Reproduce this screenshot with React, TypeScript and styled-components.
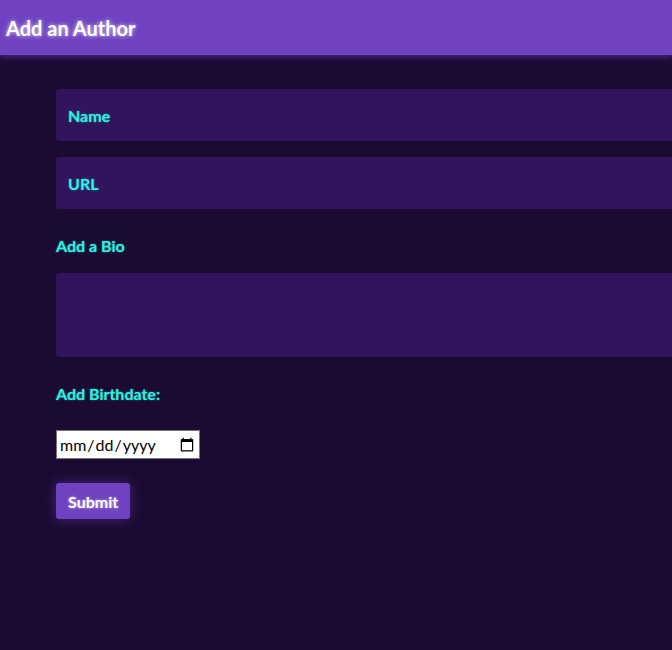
import styled, { createGlobalStyle } from "styled-components";

const GlobalStyle = createGlobalStyle`
  html, body {
    margin: 0;
    padding: 0;
    overflow: hidden;
    background: #1b0b33;
    font-family: Lato, "Noto Sans", sans-serif;
  }
`;

const Page = styled.div`
  min-height: 650px;
  background: #1b0b33;
`;

const Header = styled.header`
  height: 55px;
  display: flex;
  align-items: center;
  padding: 0 6px;
  background: #6f42c1;
  box-shadow: 0 2px 6px rgba(111, 66, 193, 0.55);
`;

const Title = styled.h1`
  margin: 0;
  color: #fff;
  font-size: 20px;
  font-weight: 700;
  text-shadow: 0 0 4px rgba(255, 255, 255, 0.8);
`;

const Form = styled.form`
  display: flex;
  flex-direction: column;
  align-items: flex-start;
  padding: 34px 0 0 56px;
`;

const Field = styled.input`
  box-sizing: border-box;
  width: 700px;
  height: 52px;
  margin-bottom: 16px;
  padding: 0 12px;
  border: none;
  border-radius: 3px;
  background: #30145c;
  color: #2ef2e0;
  font-family: inherit;
  font-size: 16px;
  font-weight: 700;
  outline: none;

  &::placeholder {
    color: #2ef2e0;
    opacity: 1;
    text-shadow: 0 0 2px rgba(46, 242, 224, 0.6);
  }
`;

const Label = styled.label<{ $gap?: number }>`
  margin: 11px 0 ${(p) => p.$gap ?? 18}px;
  color: #2ef2e0;
  font-size: 16px;
  font-weight: 700;
  text-shadow: 0 0 2px rgba(46, 242, 224, 0.6);
`;

const Bio = styled.textarea`
  box-sizing: border-box;
  width: 700px;
  height: 84px;
  margin-bottom: 16px;
  border: none;
  border-radius: 3px;
  background: #30145c;
  resize: none;
  outline: none;
`;

const DateInput = styled.input`
  box-sizing: border-box;
  width: 144px;
  height: 29px;
  margin-bottom: 24px;
  padding: 0 2px;
  border: 1px solid #767676;
  background: #fff;
  font-family: Lato, sans-serif;
  font-size: 16px;

  &::-webkit-datetime-edit-text {
    padding: 0;
  }
`;

const SubmitButton = styled.button`
  height: 36px;
  padding: 0 12px;
  border: none;
  border-radius: 3px;
  background: #6f42c1;
  color: #fff;
  font-family: inherit;
  font-size: 16px;
  font-weight: 700;
  box-shadow: 0 0 12px rgba(111, 66, 193, 0.5);
  text-shadow: 0 0 3px rgba(255, 255, 255, 0.6);
  cursor: pointer;
`;

const App = () => {
  return (
    <Page>
      <GlobalStyle />
      <Header>
        <Title>Add an Author</Title>
      </Header>
      <Form onSubmit={(e) => e.preventDefault()}>
        <Field type="text" placeholder="Name" />
        <Field type="url" placeholder="URL" />
        <Label htmlFor="bio">Add a Bio</Label>
        <Bio id="bio" />
        <Label htmlFor="birthdate" $gap={27}>
          Add Birthdate:
        </Label>
        <DateInput id="birthdate" type="date" />
        <SubmitButton type="submit">Submit</SubmitButton>
      </Form>
    </Page>
  );
};

export default App;
